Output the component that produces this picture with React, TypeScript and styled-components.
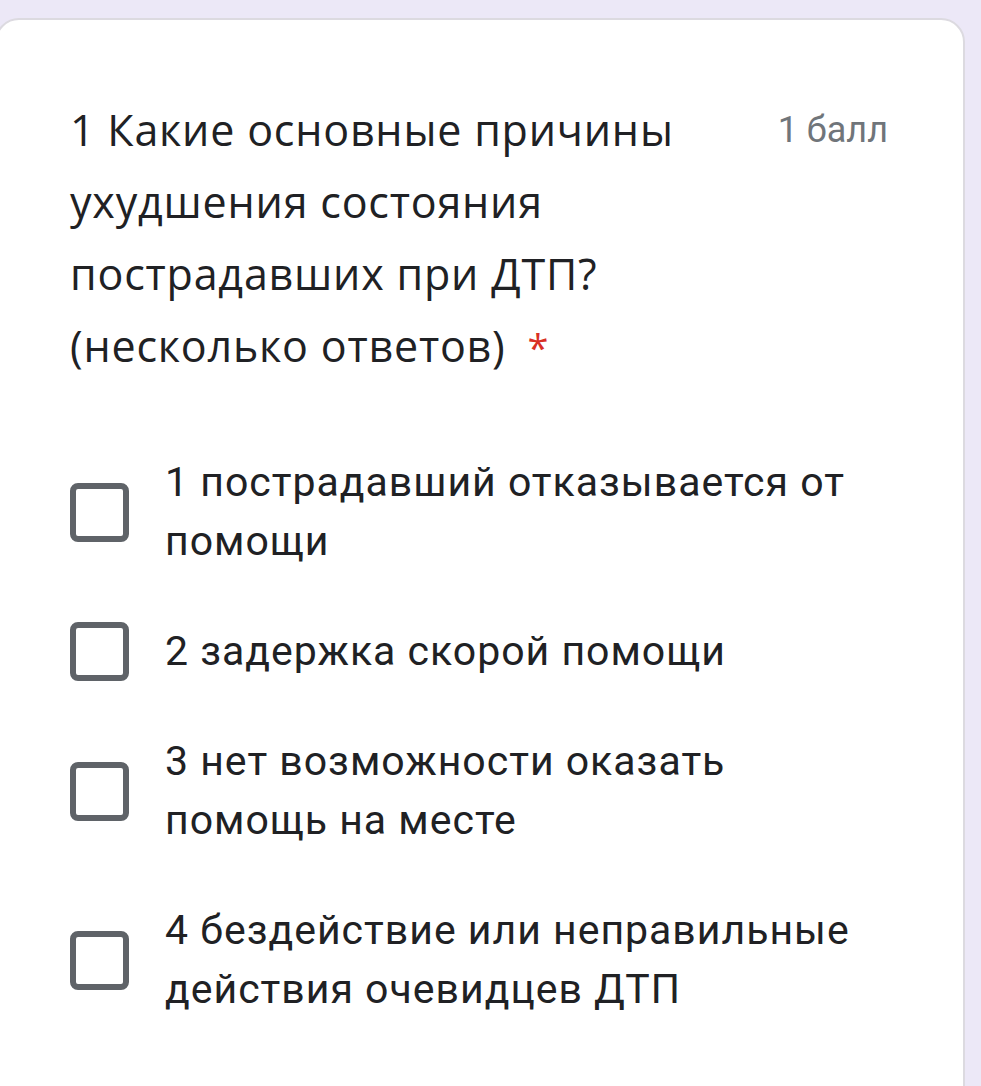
import React from "react";
import styled, { createGlobalStyle } from "styled-components";

const Global = createGlobalStyle`
  html, body { margin: 0; padding: 0; background: #ece8f7; }
  body { overflow: hidden; }
`;

const Page = styled.div`
  width: 981px;
  height: 1086px;
  box-sizing: border-box;
  padding: 18px 16px 0 0;
  overflow: hidden;
`;

const Card = styled.div`
  margin-left: -5px;
  width: 970px;
  height: 1100px;
  box-sizing: border-box;
  background: #fff;
  border: 2px solid #dcdae0;
  border-radius: 24px;
  padding: 74px 75px 0 73px;
  display: flex;
  flex-direction: column;
  gap: 70px;
`;

const Header = styled.div`
  display: flex;
  align-items: flex-start;
  justify-content: space-between;
`;

const Title = styled.div`
  width: 660px;
  font-family: "Open Sans", sans-serif;
  font-size: 43px;
  line-height: 72px;
  color: #202124;
  letter-spacing: 0.8px;
`;

const Star = styled.span`
  color: #d93025;
  margin-left: 22px;
  font-size: 38px;
`;

const Points = styled.div`
  font-family: Roboto, sans-serif;
  font-size: 36px;
  line-height: 72px;
  color: #70757a;
`;

const Options = styled.div`
  display: flex;
  flex-direction: column;
  gap: 51px;
`;

const Option = styled.label`
  display: flex;
  align-items: center;
  gap: 36px;
`;

const Box = styled.span`
  flex: none;
  width: 59px;
  height: 59px;
  box-sizing: border-box;
  border: 6px solid #5f6368;
  border-radius: 8px;
`;

const OptionText = styled.div`
  font-family: Roboto, sans-serif;
  font-size: 41px;
  line-height: 59px;
  color: #202124;
  letter-spacing: 1px;
  max-width: 705px;
`;

const options = [
  "1 пострадавший отказывается от помощи",
  "2 задержка скорой помощи",
  "3 нет возможности оказать помощь на месте",
  "4 бездействие или неправильные действия очевидцев ДТП",
];

export default function App() {
  return (
    <>
      <Global />
      <Page>
        <Card>
          <Header>
            <Title>
              1 Какие основные причины ухудшения состояния пострадавших при ДТП?
              (несколько ответов)<Star>*</Star>
            </Title>
            <Points>1 балл</Points>
          </Header>
          <Options>
            {options.map((o) => (
              <Option key={o}>
                <Box />
                <OptionText>{o}</OptionText>
              </Option>
            ))}
          </Options>
        </Card>
      </Page>
    </>
  );
}
